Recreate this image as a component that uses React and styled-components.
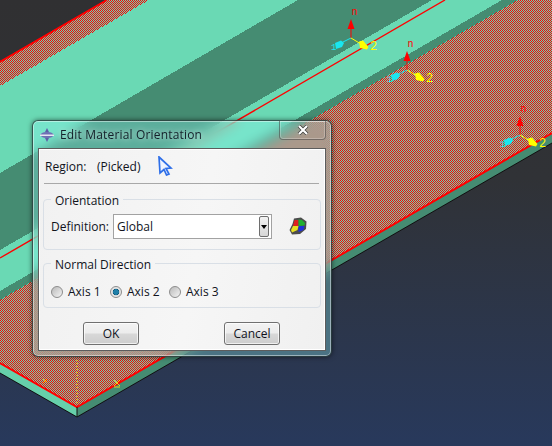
import styled, { createGlobalStyle } from 'styled-components';

const GlobalStyle = createGlobalStyle`
  html, body {
    margin: 0;
    padding: 0;
    background: #2b3650;
  }
`;

const Viewport = styled.div`
  position: relative;
  width: 552px;
  height: 446px;
  overflow: hidden;
  font-family: "Open Sans", "Noto Sans", sans-serif;
  font-size: 12px;
  color: #10131c;
`;

const Scene = styled.svg`
  position: absolute;
  inset: 0;
  display: block;
`;

const Window = styled.div`
  position: absolute;
  left: 32px;
  top: 120px;
  width: 300px;
  height: 237px;
  box-sizing: border-box;
  display: flex;
  flex-direction: column;
  padding: 0 5px 5px 5px;
  border: 1px solid rgba(30, 40, 40, 0.75);
  border-radius: 6px;
  background: rgba(150, 255, 255, 0.3);
  backdrop-filter: blur(6px);
  box-shadow: 0 0 5px rgba(0, 0, 0, 0.55), inset 0 0 0 1px rgba(255, 255, 255, 0.45);
`;

const TitleBar = styled.div`
  display: flex;
  align-items: center;
  height: 27px;
  gap: 5px;
  padding-left: 1px;
  flex: none;
`;

const Title = styled.span`
  flex: 1;
  font-size: 12px;
  letter-spacing: 0.17px;
  color: #14202a;
  text-shadow: 0 0 6px rgba(255, 255, 255, 0.8);
`;

const CloseButton = styled.div`
  align-self: flex-start;
  width: 47px;
  height: 19px;
  box-sizing: border-box;
  display: flex;
  align-items: center;
  justify-content: center;
  border: 1px solid rgba(70, 70, 70, 0.55);
  border-top: none;
  border-radius: 0 0 4px 4px;
  box-shadow: inset 0 0 0 1px rgba(255, 255, 255, 0.25);
`;

const Client = styled.div`
  flex: 1;
  display: flex;
  flex-direction: column;
  padding: 0 4px 0 4px;
  border: 1px solid #5c5c5c;
  background: linear-gradient(100deg, #f1f1f1 0%, #f6f6f6 55%, #f0f0f0 100%);
  box-shadow: inset 0 0 0 1px #fff;
  min-height: 0;
`;

const RegionRow = styled.div`
  display: flex;
  align-items: center;
  height: 34px;
  padding-left: 2px;
  flex: none;
`;

const RegionLabel = styled.span`
  width: 52px;
`;

const PickedValue = styled.span`
  width: 60px;
`;

const Divider = styled.div`
  height: 1px;
  background: #a8a8a8;
  margin: 0 2px 0 1px;
  flex: none;
`;

const Group = styled.fieldset`
  margin: ${({ $top }) => $top}px 0 0;
  padding: ${({ $inset }) => $inset}px 7px 0;
  height: ${({ $height }) => $height}px;
  box-sizing: border-box;
  border: 1px solid #d9dfe6;
  border-radius: 4px;
  display: flex;
  align-items: flex-start;
  min-width: 0;
  flex: none;
`;

const Legend = styled.legend`
  padding: 4px 4px 0;
  margin-left: 0;
  line-height: 14px;
`;

const FieldLabel = styled.span`
  width: 62px;
  flex: none;
  line-height: 25px;
`;

const Select = styled.div`
  width: 159px;
  height: 25px;
  box-sizing: border-box;
  display: flex;
  align-items: center;
  justify-content: space-between;
  padding: 0 2px 0 3px;
  background: #fff;
  border: 1px solid #a2a2a2;
`;

const SelectArrow = styled.div`
  width: 10px;
  height: 21px;
  box-sizing: border-box;
  display: flex;
  align-items: center;
  justify-content: center;
  border: 1px solid #6e6e6e;
  border-radius: 2px;
  background: linear-gradient(#f3f3f3, #d6d6d6);
  &::after {
    content: "";
    border-left: 3px solid transparent;
    border-right: 3px solid transparent;
    border-top: 4px solid #000;
  }
`;

const PartitionIcon = styled.svg`
  margin: 3px 0 0 17px;
  flex: none;
`;

const RadioRow = styled.div`
  display: flex;
  align-items: center;
`;

const RadioItem = styled.label`
  width: 59px;
  display: flex;
  align-items: center;
  gap: 5px;
`;

const RadioDot = styled.span`
  width: 12px;
  height: 12px;
  box-sizing: border-box;
  flex: none;
  border-radius: 50%;
  border: 1px solid #8c8c8c;
  background: ${({ $checked }) =>
    $checked
      ? 'radial-gradient(circle, #1f7fa8 0 2.5px, #0d4f6e 3px, #e2e2e2 3.6px, #f2f2f2 100%)'
      : 'linear-gradient(135deg, #b9b9b9, #f4f4f4)'};
`;

const ButtonRow = styled.div`
  display: flex;
  justify-content: space-between;
  padding: 0 41px 0 40px;
  margin-top: 14px;
`;

const Button = styled.button`
  width: 56px;
  height: 23px;
  padding: 0;
  border: 1px solid #707070;
  border-radius: 3px;
  font: inherit;
  color: inherit;
  background: linear-gradient(#f3f3f3 0%, #ececec 48%, #d8d8d8 52%, #cdcdcd 100%);
  box-shadow: inset 0 0 0 1px rgba(255, 255, 255, 0.7);
`;

// model surfaces, corner coordinates read off the screenshot
const surfaces = [
  { points: '107,0 149,0 0,86 0,62', fill: 'url(#hatch)' },
  { points: '149,0 298,0 0,173 0,86', fill: '#6ad9b4' },
  { points: '298,0 432,0 0,250 0,173', fill: '#458c72' },
  { points: '432,0 502,0 0,291 0,250', fill: '#6ad9b4' },
  { points: '502,0 518,0 0,300 0,291', fill: '#458c72' },
  { points: '518,0 552,0 552,133 77,407 0,363 0,300', fill: 'url(#hatch)' },
  { points: '0,363 77,407 77,417 0,373', fill: '#66d0aa' },
  { points: '77,407 552,133 552,143 77,417', fill: '#458c72' },
];

const triads = [
  { x: 351, y: 38 },
  { x: 407, y: 70 },
  { x: 520, y: 135 },
];

const Triad = ({ x, y }) => (
  <g transform={`translate(${x} ${y})`} fontFamily="Liberation Mono, monospace">
    <path d="M0 0V-12" stroke="#f00" />
    <path d="M0 -19L3.5 -9H-3.5Z" fill="#f00" />
    <text x="0.5" y="-23" fill="#f00" fontSize="10">n</text>
    <path d="M0 0L-10 5" stroke="#19e6f0" />
    <path d="M-16 5L-10 2.5L-7 5L-9 9L-15 11Z" fill="#19e6f0" />
    <text x="-20" y="12" fill="#19e6f0" fontSize="9">1</text>
    <path d="M0 0L10 6" stroke="#ff0" />
    <path d="M8 3.5L12 2.5L17.5 9L16 11.5L9 10Z" fill="#ff0" />
    <text x="19" y="12" fill="#ff0" fontSize="12">2</text>
  </g>
);

const ModelView = () => (
  <Scene width="552" height="446" viewBox="0 0 552 446">
    <defs>
      <linearGradient id="backdrop" x1="0" y1="0" x2="0" y2="1">
        <stop offset="0" stopColor="#303032" />
        <stop offset="0.4" stopColor="#303236" />
        <stop offset="1" stopColor="#28395c" />
      </linearGradient>
      <pattern id="hatch" width="2" height="2" patternUnits="userSpaceOnUse">
        <path d="M0 0h2v2h-2z" fill="#6ad9b4" shapeRendering="crispEdges" />
        <path d="M0 0h1v1h-1zM1 1h1v1h-1z" fill="#f00" shapeRendering="crispEdges" />
      </pattern>
    </defs>
    <rect width="552" height="446" fill="url(#backdrop)" />
    {surfaces.map((s) => (
      <polygon key={s.points} points={s.points} fill={s.fill} shapeRendering="crispEdges" />
    ))}
    <g fill="none" stroke="#f00">
      <path d="M107 0L0 62" strokeWidth="2" />
      <path d="M445 0L0 258" strokeWidth="1.4" />
      <path d="M0 363L77 407L552 133" strokeWidth="2" />
    </g>
    <path d="M0 373L77 417L552 143" fill="none" stroke="#111" />
    <path d="M77 407V417" stroke="#111" />
    <path d="M77 360V405" stroke="#ff0" strokeDasharray="1 2" />
    <path d="M43 379l4 3M47 379l-4 4M114 380l6 6M120 380l-6 6M114 387h6" stroke="#e8d020" fill="none" />
    {triads.map((t) => (
      <Triad key={t.x} x={t.x} y={t.y} />
    ))}
  </Scene>
);

export default function App() {
  return (
    <Viewport>
      <GlobalStyle />
      <ModelView />
      <Window>
        <TitleBar>
          <svg width="16" height="16" viewBox="0 0 16 16">
            <path d="M8 1L10 5H6ZM8 15L6 11H10Z" fill="#5d5fa8" />
            <path d="M1 8Q3 5 7 5H9Q13 5 15 8Q13 11 9 11H7Q3 11 1 8Z" fill="#6f70b4" />
            <path d="M1 7.5H15V9H1Z" fill="#e6e6f2" />
          </svg>
          <Title>Edit Material Orientation</Title>
          <CloseButton>
            <svg width="12" height="10" viewBox="0 0 12 10">
              <path d="M2 1L10 9M10 1L2 9" stroke="#3c3c3c" strokeWidth="3.6" />
              <path d="M2 1L10 9M10 1L2 9" stroke="#fff" strokeWidth="2.2" />
            </svg>
          </CloseButton>
        </TitleBar>
        <Client>
          <RegionRow>
            <RegionLabel>Region:</RegionLabel>
            <PickedValue>(Picked)</PickedValue>
            <svg width="16" height="20" viewBox="0 0 16 20">
              <path d="M2 1L14 12L9 12.5L12 18L9.5 19L7 13.5L3 17Z" fill="#eef3ff" stroke="#2f6fe8" strokeWidth="1.7" />
            </svg>
          </RegionRow>
          <Divider />
          <Group $top={6} $height={60} $inset={6}>
            <Legend>Orientation</Legend>
            <FieldLabel>Definition:</FieldLabel>
            <Select>
              Global
              <SelectArrow />
            </Select>
            <PartitionIcon width="18" height="18" viewBox="0 0 18 18">
              <path d="M5 1.5L12 0.5L17.5 4.5L17 12L11 17L3 17.5L0.5 13L3.5 7Z" fill="#222" opacity="0.8" />
              <path d="M5.5 3H9.5V9H4Z" fill="#e02020" />
              <path d="M9.5 2.5L13 3L16 6L15.5 8.5L9.5 9Z" fill="#20b030" />
              <path d="M9.5 9H15.5L14.5 13L9.5 15Z" fill="#2030d8" />
              <path d="M4 9H9.5L8.5 13L3 15.5L2 13Z" fill="#e8e020" />
            </PartitionIcon>
          </Group>
          <Group $top={4} $height={54} $inset={11}>
            <Legend>Normal Direction</Legend>
            <RadioRow>
              <RadioItem><RadioDot />Axis 1</RadioItem>
              <RadioItem><RadioDot $checked />Axis 2</RadioItem>
              <RadioItem><RadioDot />Axis 3</RadioItem>
            </RadioRow>
          </Group>
          <ButtonRow>
            <Button>OK</Button>
            <Button>Cancel</Button>
          </ButtonRow>
        </Client>
      </Window>
    </Viewport>
  );
}
